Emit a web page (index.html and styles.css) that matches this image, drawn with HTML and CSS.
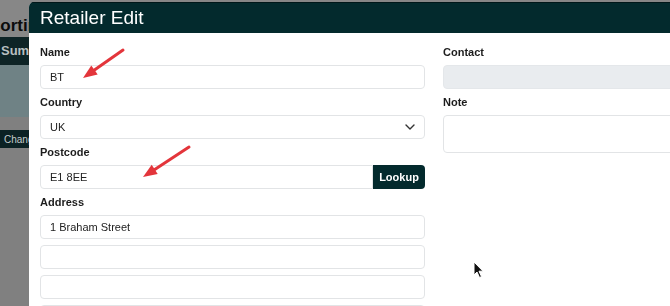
FILE: index.html
```html
<!DOCTYPE html>
<html lang="en">
<head>
    <meta charset="UTF-8">
    <title>Retailer Edit</title>
    <link rel="stylesheet" href="styles.css">
</head>
<body>
    <!-- Page behind the modal (dimmed) -->
    <div class="backdrop">
        <h1 class="page-title">Sorting</h1>
        <div class="page-nav">Summary</div>
        <div class="page-band"></div>
        <button class="page-btn" type="button">Change</button>
    </div>

    <div class="modal">
        <div class="modal-header">Retailer Edit</div>
        <form class="modal-body">
            <div class="col">
                <label for="name">Name</label>
                <input type="text" id="name" value="BT">

                <label for="country">Country</label>
                <div class="select-wrap">
                    <select id="country">
                        <option>UK</option>
                    </select>
                    <svg class="chevron" width="10" height="6" viewBox="0 0 10 6">
                        <path d="M1 1 L5 5 L9 1" fill="none" stroke="#333" stroke-width="1.4" stroke-linecap="round" stroke-linejoin="round"/>
                    </svg>
                </div>

                <label for="postcode">Postcode</label>
                <div class="input-group">
                    <input type="text" id="postcode" value="E1 8EE">
                    <button type="button" class="lookup">Lookup</button>
                </div>

                <label for="address1">Address</label>
                <input type="text" id="address1" value="1 Braham Street">
                <input type="text" class="addr" id="address2">
                <input type="text" class="addr" id="address3">
                <input type="text" class="addr" id="address4">
            </div>
            <div class="col col-right">
                <label for="contact">Contact</label>
                <input type="text" id="contact" disabled>

                <label for="note">Note</label>
                <textarea id="note"></textarea>
            </div>
        </form>
    </div>

    <!-- Annotation arrows -->
    <svg class="annotations" width="670" height="306" viewBox="0 0 670 306">
        <line x1="123" y1="50" x2="93" y2="71" stroke="#e3353b" stroke-width="3" stroke-linecap="round"/>
        <polygon points="83,78 97.7,74.5 91.3,65.5" fill="#e3353b"/>
        <line x1="189" y1="147" x2="154" y2="170" stroke="#e3353b" stroke-width="3" stroke-linecap="round"/>
        <polygon points="143,177 157.7,174 151.7,164.8" fill="#e3353b"/>
    </svg>

    <svg class="cursor" width="12" height="18" viewBox="0 0 12 18">
        <path d="M1 1 L1 14 L4 11 L6.5 16.5 L8.5 15.6 L6 10.2 L10 10.2 Z" fill="#111" stroke="#fff" stroke-width="1"/>
    </svg>
</body>
</html>
```

FILE: styles.css
```css
html, body {
    margin: 0;
    height: 100%;
    overflow: hidden;
}
body {
    font-family: "Liberation Sans", Arial, sans-serif;
    background-color: #808080;
    color: #222;
}

/* Dimmed page behind */
.backdrop {
    display: flex;
    flex-direction: column;
    align-items: flex-start;
}
.page-title {
    margin: 0;
    height: 37px;
    box-sizing: border-box;
    padding-top: 16px;
    text-indent: -11px;
    font-size: 17px;
    font-weight: bold;
    color: #0c0c0c;
    background-color: #878787;
    width: 100%;
}
.page-nav {
    width: 100%;
    height: 28px;
    box-sizing: border-box;
    padding-top: 6px;
    text-indent: 1px;
    font-size: 13px;
    font-weight: bold;
    color: #b8bfc0;
    background-color: #0e2426;
}
.page-band {
    width: 100%;
    height: 52px;
    background-color: #6f8285;
}
.page-btn {
    margin-top: 13px;
    height: 18px;
    padding: 0 4px;
    border: none;
    background-color: #0b2224;
    color: #c4cccd;
    font-family: "Liberation Sans", Arial, sans-serif;
    font-size: 10px;
}

/* Modal */
.modal {
    position: fixed;
    top: 2px;
    left: 29px;
    width: 720px;
    bottom: -40px;
    background-color: #fff;
    border-radius: 5px 5px 0 0;
    overflow: hidden;
}
.modal-header {
    height: 31px;
    box-sizing: border-box;
    padding: 4px 11px 0;
    background-color: #032a2d;
    border-top: 1px solid #001719;
    color: #fff;
    font-size: 19px;
}
.modal-body {
    display: grid;
    grid-template-columns: 385px 270px;
    column-gap: 18px;
    padding: 12px 11px 0;
}
.col {
    display: flex;
    flex-direction: column;
}
label {
    display: block;
    font-size: 11px;
    font-weight: bold;
    line-height: 14px;
    margin-bottom: 6px;
    color: #1c1c1c;
}
input[type="text"], select, textarea {
    box-sizing: border-box;
    height: 24px;
    width: 100%;
    margin: 0 0 6px;
    padding: 0 9px;
    border: 1px solid #e2e4e6;
    border-radius: 4px;
    background-color: #fff;
    font-family: "Liberation Sans", Arial, sans-serif;
    font-size: 11px;
    color: #222;
    outline: none;
}
input[disabled] {
    background-color: #e9ecef;
    border-color: #e4e7ea;
}
textarea {
    height: 38px;
    resize: none;
}
.select-wrap {
    position: relative;
}
select {
    appearance: none;
    -webkit-appearance: none;
}
.chevron {
    position: absolute;
    right: 10px;
    top: 9px;
}
.input-group {
    display: flex;
    margin-bottom: 6px;
}
.input-group input[type="text"] {
    margin: 0;
    border-radius: 4px 0 0 4px;
}
.lookup {
    flex: none;
    width: 52px;
    height: 24px;
    border: none;
    border-radius: 0 4px 4px 0;
    background-color: #032a2d;
    color: #fff;
    font-family: "Liberation Sans", Arial, sans-serif;
    font-size: 11px;
    font-weight: bold;
    cursor: pointer;
}

/* Overlays */
.annotations {
    position: fixed;
    top: 0;
    left: 0;
    pointer-events: none;
}
.cursor {
    position: fixed;
    left: 473px;
    top: 261px;
}
```
